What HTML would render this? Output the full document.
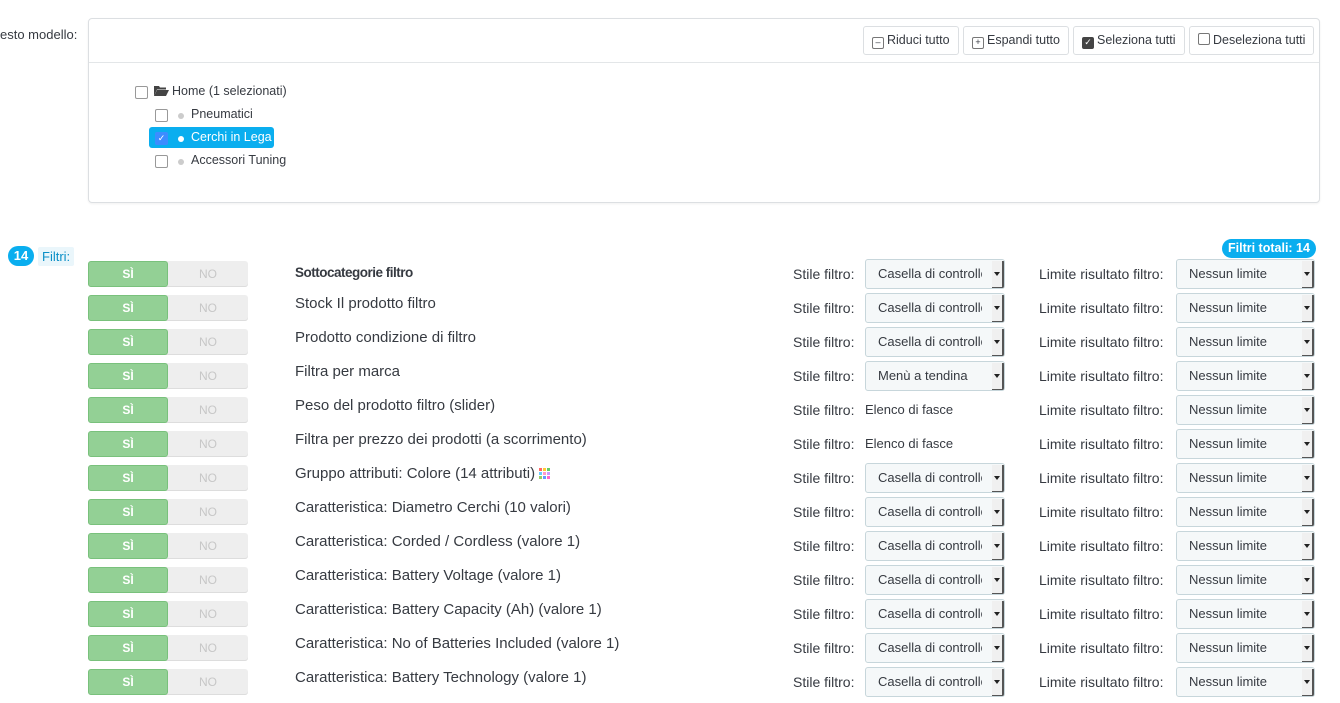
<!DOCTYPE html>
<html><head><meta charset="utf-8"><style>
body{margin:0;width:1340px;height:698px;overflow:hidden;background:#fff;font-family:"Liberation Sans","DejaVu Sans",sans-serif;color:#363a41;font-size:13px;position:relative}
.a{position:absolute;white-space:nowrap}
.panel{position:absolute;left:88px;top:18px;width:1232px;height:185px;border:1px solid #dcdfe2;border-radius:4px;box-sizing:border-box;box-shadow:0 1px 2px rgba(0,0,0,.06)}
.hdr{position:absolute;left:0;top:0;right:0;height:43px;border-bottom:1px solid #e3e6e8}
.btn{position:absolute;top:7px;height:29px;border:1px solid #dcdfe2;border-radius:3px;box-sizing:border-box;font-size:12.5px;line-height:27px;padding:0 8px;color:#363a41;background:#fff}
.cb{display:inline-block;width:10px;height:10px;border:1px solid #777;border-radius:2px;vertical-align:-1px;margin-right:3px;font-size:9px;line-height:9px;text-align:center}
.tcb{position:absolute;width:11px;height:11px;border:1px solid #999;border-radius:2px;background:#fff}
.dot{position:absolute;width:6px;height:6px;border-radius:3px;background:#ccc}
.row{position:absolute;left:0;width:1340px;height:34px}
.tg{position:absolute;left:88px;top:0;width:160px;height:26px;border-radius:3px;background:#eee;box-shadow:inset 0 -1px 0 #ddd}
.tg .y{position:absolute;left:0;top:0;width:80px;height:26px;background:#93d095;border:1px solid #79c17c;box-sizing:border-box;border-radius:3px;color:#fff;text-align:center;line-height:24px;font-size:12px;font-weight:bold}
.tg .n{position:absolute;left:80px;top:0;width:80px;text-align:center;line-height:26px;color:#c7c7c7;font-size:12px}
.tt{position:absolute;left:295px;top:0px;font-size:15px}
.l1{position:absolute;left:793px;top:5px;font-size:14px}
.l2{position:absolute;left:1039px;top:5px;font-size:14px}
.sel{position:absolute;top:-2px;height:30px;border:1px solid #c7d6db;border-radius:3px;background:#f5f8f9;box-sizing:border-box;line-height:28px;padding-left:12px;font-size:13px;overflow:hidden;white-space:nowrap}
.sel span{display:inline-block;overflow:hidden;vertical-align:top}
.s1 span{width:104px}
.sel:after{content:"";position:absolute;right:0;top:1px;width:10px;height:26px;border-right:2px solid #555;border-bottom:2px solid #555;background:#f0f0f0;border-radius:0 0 2px 0}
.sel i{position:absolute;right:4px;top:12px;width:0;height:0;border-left:3px solid transparent;border-right:3px solid transparent;border-top:4px solid #222;z-index:2}
.s1{left:865px;width:140px}
.s2{left:1176px;width:139px}
.plain{position:absolute;left:865px;top:5px;font-size:13px}
</style></head><body>
<div class="a" style="left:0;top:27px;font-size:13px">esto modello:</div>
<div class="panel"><div class="hdr">
<div class="btn" style="left:774px"><span class="cb">–</span>Riduci tutto</div>
<div class="btn" style="left:874px"><span class="cb">+</span>Espandi tutto</div>
<div class="btn" style="left:984px"><span class="cb" style="background:#444;border-color:#444;color:#fff">✓</span>Seleziona tutti</div>
<div class="btn" style="left:1100px"><span class="cb"></span>Deseleziona tutti</div>
</div></div>
<div class="tcb" style="left:135px;top:86px"></div>
<svg class="a" style="left:154px;top:85px" width="15" height="12" viewBox="0 0 15 12"><path d="M0 1h5l1 1.5h6v2H3L0 11z" fill="#444"/><path d="M3 5h12l-3 6H0z" fill="#444"/></svg>
<div class="a" style="left:172px;top:84px;font-size:12.5px">Home (1 selezionati)</div>
<div class="tcb" style="left:155px;top:109px"></div><div class="dot" style="left:178px;top:113px"></div>
<div class="a" style="left:191px;top:107px;font-size:12.5px">Pneumatici</div>
<div class="a" style="left:149px;top:127px;width:125px;height:21px;background:#0aaeef;border-radius:3px"></div>
<div class="tcb" style="left:155px;top:132px;background:#3c8dff;border-color:#3c8dff;color:#fff;font-size:9px;line-height:11px;text-align:center">✓</div><div class="dot" style="left:178px;top:136px;background:#fff"></div>
<div class="a" style="left:191px;top:130px;font-size:12.5px;color:#fff">Cerchi in Lega</div>
<div class="tcb" style="left:155px;top:155px"></div><div class="dot" style="left:178px;top:159px"></div>
<div class="a" style="left:191px;top:153px;font-size:12.5px">Accessori Tuning</div>

<div class="a" style="left:8px;top:246px;width:26px;height:20px;border-radius:10px;background:#0aaeef;color:#fff;font-weight:bold;text-align:center;line-height:20px;font-size:13px">14</div>
<div class="a" style="left:38px;top:247px;padding:0 4px;height:19px;background:#eaf6fb;color:#0a8fc7;line-height:19px;border-radius:2px">Filtri:</div>
<div class="a" style="left:1222px;top:239px;padding:0 6px;height:19px;background:#0aaeef;border-radius:10px;color:#fff;font-weight:bold;line-height:19px;font-size:12.5px">Filtri totali: 14</div>

<div class="row" style="top:261px"><div class="tg"><div class="y">SÌ</div><div class="n">NO</div></div><div class="tt" style="top:4px;font-weight:bold;font-size:13.5px;letter-spacing:-.5px">Sottocategorie filtro</div><div class="l1">Stile filtro:</div><div class="sel s1"><span>Casella di controllo</span><i></i></div><div class="l2">Limite risultato filtro:</div><div class="sel s2">Nessun limite<i></i></div></div>
<div class="row" style="top:295px"><div class="tg"><div class="y">SÌ</div><div class="n">NO</div></div><div class="tt">Stock Il prodotto filtro</div><div class="l1">Stile filtro:</div><div class="sel s1"><span>Casella di controllo</span><i></i></div><div class="l2">Limite risultato filtro:</div><div class="sel s2">Nessun limite<i></i></div></div>
<div class="row" style="top:329px"><div class="tg"><div class="y">SÌ</div><div class="n">NO</div></div><div class="tt">Prodotto condizione di filtro</div><div class="l1">Stile filtro:</div><div class="sel s1"><span>Casella di controllo</span><i></i></div><div class="l2">Limite risultato filtro:</div><div class="sel s2">Nessun limite<i></i></div></div>
<div class="row" style="top:363px"><div class="tg"><div class="y">SÌ</div><div class="n">NO</div></div><div class="tt">Filtra per marca</div><div class="l1">Stile filtro:</div><div class="sel s1"><span>Menù a tendina</span><i></i></div><div class="l2">Limite risultato filtro:</div><div class="sel s2">Nessun limite<i></i></div></div>
<div class="row" style="top:397px"><div class="tg"><div class="y">SÌ</div><div class="n">NO</div></div><div class="tt">Peso del prodotto filtro (slider)</div><div class="l1">Stile filtro:</div><div class="plain">Elenco di fasce</div><div class="l2">Limite risultato filtro:</div><div class="sel s2">Nessun limite<i></i></div></div>
<div class="row" style="top:431px"><div class="tg"><div class="y">SÌ</div><div class="n">NO</div></div><div class="tt">Filtra per prezzo dei prodotti (a scorrimento)</div><div class="l1">Stile filtro:</div><div class="plain">Elenco di fasce</div><div class="l2">Limite risultato filtro:</div><div class="sel s2">Nessun limite<i></i></div></div>
<div class="row" style="top:465px"><div class="tg"><div class="y">SÌ</div><div class="n">NO</div></div><div class="tt">Gruppo attributi: Colore (14 attributi) <svg width="11" height="11" viewBox="0 0 11 11" style="vertical-align:-1px"><rect x="0" y="0" width="3" height="3" fill="#f66"/><rect x="4" y="0" width="3" height="3" fill="#fc3"/><rect x="8" y="0" width="3" height="3" fill="#6c6"/><rect x="0" y="4" width="3" height="3" fill="#6cf"/><rect x="4" y="4" width="3" height="3" fill="#f9c"/><rect x="8" y="4" width="3" height="3" fill="#c9f"/><rect x="0" y="8" width="3" height="3" fill="#9c6"/><rect x="4" y="8" width="3" height="3" fill="#69f"/><rect x="8" y="8" width="3" height="3" fill="#f6c"/></svg></div><div class="l1">Stile filtro:</div><div class="sel s1"><span>Casella di controllo</span><i></i></div><div class="l2">Limite risultato filtro:</div><div class="sel s2">Nessun limite<i></i></div></div>
<div class="row" style="top:499px"><div class="tg"><div class="y">SÌ</div><div class="n">NO</div></div><div class="tt">Caratteristica: Diametro Cerchi (10 valori)</div><div class="l1">Stile filtro:</div><div class="sel s1"><span>Casella di controllo</span><i></i></div><div class="l2">Limite risultato filtro:</div><div class="sel s2">Nessun limite<i></i></div></div>
<div class="row" style="top:533px"><div class="tg"><div class="y">SÌ</div><div class="n">NO</div></div><div class="tt">Caratteristica: Corded / Cordless (valore 1)</div><div class="l1">Stile filtro:</div><div class="sel s1"><span>Casella di controllo</span><i></i></div><div class="l2">Limite risultato filtro:</div><div class="sel s2">Nessun limite<i></i></div></div>
<div class="row" style="top:567px"><div class="tg"><div class="y">SÌ</div><div class="n">NO</div></div><div class="tt">Caratteristica: Battery Voltage (valore 1)</div><div class="l1">Stile filtro:</div><div class="sel s1"><span>Casella di controllo</span><i></i></div><div class="l2">Limite risultato filtro:</div><div class="sel s2">Nessun limite<i></i></div></div>
<div class="row" style="top:601px"><div class="tg"><div class="y">SÌ</div><div class="n">NO</div></div><div class="tt">Caratteristica: Battery Capacity (Ah) (valore 1)</div><div class="l1">Stile filtro:</div><div class="sel s1"><span>Casella di controllo</span><i></i></div><div class="l2">Limite risultato filtro:</div><div class="sel s2">Nessun limite<i></i></div></div>
<div class="row" style="top:635px"><div class="tg"><div class="y">SÌ</div><div class="n">NO</div></div><div class="tt">Caratteristica: No of Batteries Included (valore 1)</div><div class="l1">Stile filtro:</div><div class="sel s1"><span>Casella di controllo</span><i></i></div><div class="l2">Limite risultato filtro:</div><div class="sel s2">Nessun limite<i></i></div></div>
<div class="row" style="top:669px"><div class="tg"><div class="y">SÌ</div><div class="n">NO</div></div><div class="tt">Caratteristica: Battery Technology (valore 1)</div><div class="l1">Stile filtro:</div><div class="sel s1"><span>Casella di controllo</span><i></i></div><div class="l2">Limite risultato filtro:</div><div class="sel s2">Nessun limite<i></i></div></div>
</body></html>
